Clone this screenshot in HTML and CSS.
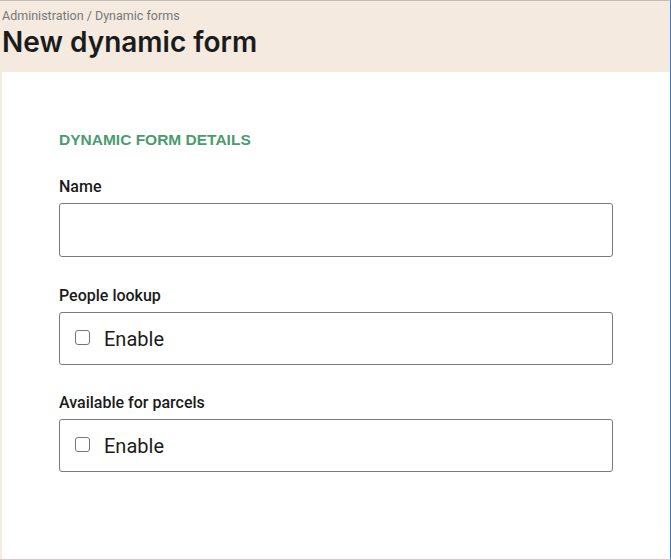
FILE: index.html
```html
<!DOCTYPE html>
<html lang="en">
<head>
<meta charset="utf-8">
<title>New dynamic form</title>
<link rel="stylesheet" href="styles.css">
</head>
<body>
<div class="page">
  <header class="page-header">
    <div class="breadcrumb">Administration / Dynamic forms</div>
    <h1 class="title">New dynamic form</h1>
  </header>
  <main class="card">
    <h2 class="section-title">Dynamic form details</h2>
    <div class="field">
      <label class="label" for="name">Name</label>
      <input class="text-input" id="name" type="text">
    </div>
    <div class="field">
      <div class="label">People lookup</div>
      <label class="check-box">
        <span class="checkbox"></span>
        <span class="check-text">Enable</span>
      </label>
    </div>
    <div class="field">
      <div class="label">Available for parcels</div>
      <label class="check-box">
        <span class="checkbox"></span>
        <span class="check-text">Enable</span>
      </label>
    </div>
  </main>
</div>
</body>
</html>
```
FILE: styles.css
```css
* { box-sizing: border-box; }
html, body { margin: 0; padding: 0; }
body {
  background: #f4eae0;
  font-family: Roboto, "Liberation Sans", sans-serif;
  color: #1a1a1a;
}
.page {
  height: 560px;
  border-top: 1px solid #c4bdb6;
  border-right: 1px solid #3f78b4;
  border-bottom: 1px solid #d6cec6;
  display: flex;
  flex-direction: column;
}
.page-header {
  height: 71px;
  padding: 7px 0 0 2px;
}
.breadcrumb {
  font-size: 12.5px;
  line-height: 16px;
  margin-bottom: -1px;
  color: #777777;
}
.title {
  margin: 0;
  font-family: Inter, Roboto, sans-serif;
  font-size: 28px;
  line-height: 38px;
  font-weight: 600;
  color: #1b1b1b;
}
.card {
  flex: 1;
  margin-left: 2px;
  background: #ffffff;
  padding: 58px 57px 0 57px;
}
.section-title {
  margin: 0 0 26px;
  font-family: "Liberation Sans", Arial, sans-serif;
  font-size: 15.5px;
  line-height: 20px;
  font-weight: 700;
  text-transform: uppercase;
  color: #4b9b70;
}
.field { margin-bottom: 28px; }
.field + .field + .field { margin-top: -1px; }
.label {
  display: block;
  font-size: 16px;
  line-height: 20px;
  font-weight: 500;
  color: #1b1b1b;
  padding-top: 1px;
  margin-bottom: 6px;
}
.text-input {
  display: block;
  width: 100%;
  height: 54px;
  border: 1px solid #7a7a7a;
  border-radius: 3px;
  background: #fff;
  font: inherit;
}
.check-box {
  display: flex;
  align-items: center;
  height: 53px;
  border: 1px solid #7a7a7a;
  border-radius: 3px;
  padding-left: 15px;
}
.checkbox {
  width: 15px;
  height: 15px;
  border: 1.5px solid #767676;
  border-radius: 3px;
  background: #fff;
  margin-top: -3px;
}
.check-text {
  margin-left: 14px;
  font-size: 20px;
  line-height: 24px;
  color: #1b1b1b;
}
```
